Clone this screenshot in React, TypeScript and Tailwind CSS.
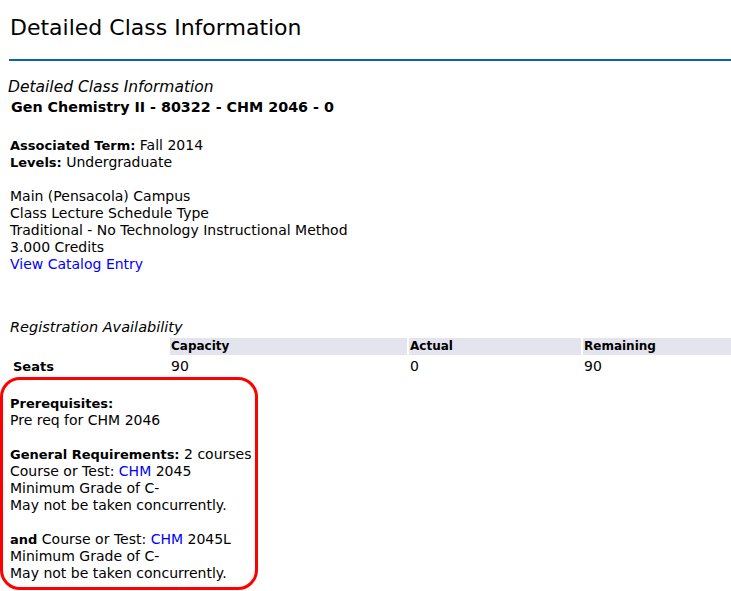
export default function App() {
  return (
    <div className="relative w-[731px] h-[591px] overflow-hidden bg-white text-black font-['DejaVu_Sans',Verdana,sans-serif] text-[14px] leading-[17px]">
      <h1 className="pl-[10px] pt-[15px] text-[22px] leading-[26px] font-normal">Detailed Class Information</h1>
      <div className="ml-[9px] mt-[18px] h-[2px] bg-[#0a66a3]" />

      <div className="pl-[8px] pt-[17px]">
        <div className="italic text-[15.5px] leading-[18px]">Detailed Class Information</div>
        <div className="pl-[3px] pt-[3px] font-bold text-[14.3px]">Gen Chemistry II - 80322 - CHM 2046 - 0</div>
      </div>

      <div className="pl-[10px] pt-[21px]">
        <div>
          <span className="font-bold text-[13px]">Associated Term:</span> Fall 2014
        </div>
        <div>
          <span className="font-bold text-[13px]">Levels:</span> Undergraduate
        </div>
        <div className="h-[17px]" />
        <div>Main (Pensacola) Campus</div>
        <div>Class Lecture Schedule Type</div>
        <div>Traditional - No Technology Instructional Method</div>
        <div>3.000 Credits</div>
        <a className="text-[#0000ff]">View Catalog Entry</a>
      </div>

      <div className="pl-[8px] pt-[46px]">
        <div className="italic text-[14.5px] pl-[2px]">Registration Availability</div>
        <div className="mt-[2px] grid grid-cols-[160px_237px_172px_1fr] gap-x-[2px] gap-y-[3px]">
          <div />
          <div className="bg-[#e3e4ee] font-bold text-[12px] h-[17px] pl-[1px]">Capacity</div>
          <div className="bg-[#e3e4ee] font-bold text-[12px] h-[17px] pl-[1px]">Actual</div>
          <div className="bg-[#e3e4ee] font-bold text-[12px] h-[17px] pl-[1px]">Remaining</div>
          <div className="font-bold text-[13px] pl-[5px]">Seats</div>
          <div className="pl-[1px]">90</div>
          <div className="pl-[1px]">0</div>
          <div className="pl-[1px]">90</div>
        </div>
      </div>

      <div className="pl-[10px] pt-[20px]">
        <div className="font-bold text-[13px]">Prerequisites:</div>
        <div>Pre req for CHM 2046</div>
        <div className="h-[17px]" />
        <div>
          <span className="font-bold text-[13px]">General Requirements:</span> 2 courses
        </div>
        <div>
          Course or Test: <a className="text-[#0000ff]">CHM</a> 2045
        </div>
        <div>Minimum Grade of C-</div>
        <div>May not be taken concurrently.</div>
        <div className="h-[17px]" />
        <div>
          <span className="font-bold text-[13px]">and</span> Course or Test: <a className="text-[#0000ff]">CHM</a> 2045L
        </div>
        <div>Minimum Grade of C-</div>
        <div>May not be taken concurrently.</div>
      </div>

      <div className="absolute left-[0px] top-[377px] w-[258px] h-[213px] border-[3px] border-[#ff0000] rounded-[20px] pointer-events-none" />
    </div>
  );
}
